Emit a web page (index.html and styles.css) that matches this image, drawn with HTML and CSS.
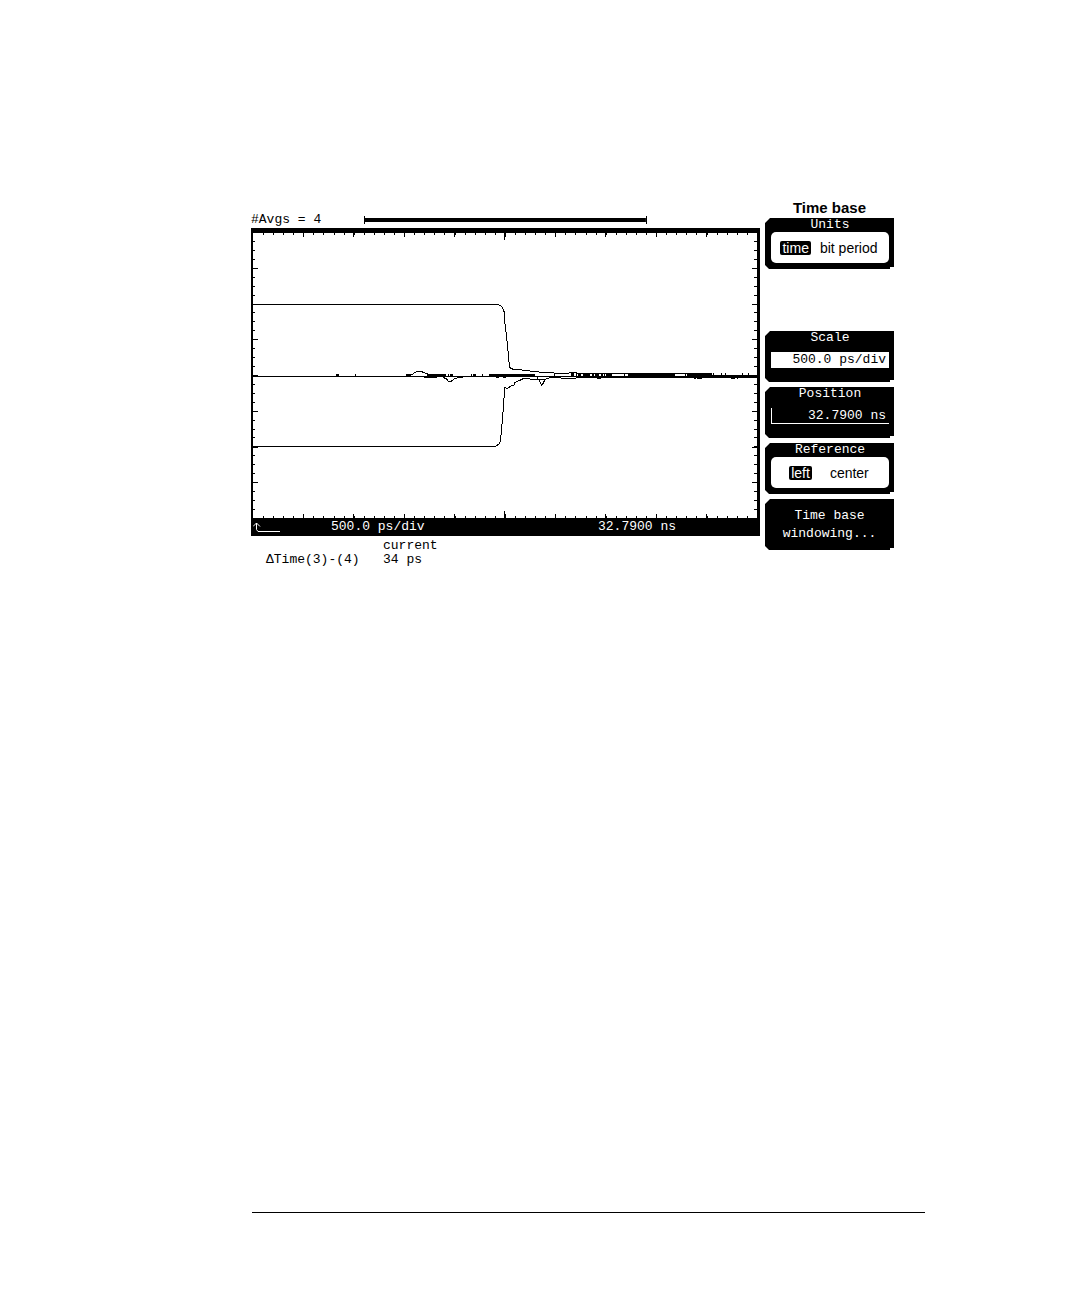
FILE: index.html
```html
<!DOCTYPE html>
<html lang="en">

<head>
    <meta charset="utf-8">
    <title>Time base</title>
    <link rel="stylesheet" href="styles.css">
</head>

<body>
    <main class="screen">
        <section class="scope">
            <div class="averages">
                <span>#Avgs = 4</span>
                <div class="progress"></div>
            </div>

            <div class="display">
                <svg class="plot" viewBox="0 0 504 285" preserveAspectRatio="none" role="img" aria-label="Waveforms">
                    <!-- graticule, short ticks -->
                    <g class="ticks">
                        <path stroke-width="4" stroke-dasharray="1 9.08" d="M10 0H504M10 285H504" />
                        <path stroke-width="4" stroke-dasharray="1 7.93" d="M0 8V285" />
                        <path stroke-width="6" stroke-dasharray="1 7.93" d="M504 8V285" />
                    </g>
                    <!-- graticule, one tick per division -->
                    <g class="ticks">
                        <path stroke-width="8" stroke-dasharray="1 49.4" d="M50 0H504M50 285H504" />
                        <path stroke-width="10" stroke-dasharray="1 34.7" d="M0 35V285M504 35V285" />
                        <path stroke-width="1" d="M251.5 0V7M251.5 278V285" />
                    </g>
                    <g class="trace">
                        <path d="M0 71.5H245L248.5 73.5L250.5 76.5L251.5 80.5V87L252.5 94L254.5 112L255.5 124L256.5 134.5L259.5 136L268.5 137L280.5 138.5L290.5 139.5L312 140.5L319.5 139.5L328 140.5H459" />
                        <path d="M0 143.5H504" />
                        <path d="M0 213.5H242.5L244.5 212L246.5 210.5L247.5 207L248.5 197L249.5 185.5L251 165.5L251.5 154.5L254.5 155.5L257 153.5L261 152L262 149.5L266.5 147.5L270.5 145.5H275.5L278.5 146.5H292L297 144.5H307L308.5 145.5H322L324.5 144.5H459" />
                        <path d="M286 146.5L287.5 150.5L288.5 152L290 150.5L291 148.5L293 146" />
                        <path d="M158.5 142L161.5 139.5L164.5 138.5H168L171 139.5L174.5 141" />
                        <path d="M171 144.5H183.5M190.5 144.5L193.5 146L195.5 148.5H198L201 146L204 145L210 144.5" />
                        <path d="M242.5 144.5H246M250 144.5H253M284.5 143V147M344 145.5H348" />
                    </g>
                    <!-- noise along the zero line -->
                    <g class="noise">
                        <path d="M83 141h3v2h-3zM102 141h1v2h-1zM153 141h5v3h-5zM174 141h19v3h-19zM195 141h1v2h-1zM197 141h3v2h-3z" />
                        <path d="M218 141h1v2h-1zM220 141h3v2h-3zM229 141h1v2h-1zM236 141h46v3h-46zM301 141h1v2h-1z" />
                        <path d="M318 140h3v4h-3zM323 140h1v4h-1zM325 140h3v4h-3zM330 140h7v4h-7zM339 140h2v4h-2zM342 140h4v4h-4zM348 140h2v4h-2zM351 140h1v4h-1zM353 140h6v4h-6z" />
                        <path d="M371 140h1v4h-1zM375 140h47v5h-47zM432 140h1v4h-1zM434 140h25v5h-25zM458 142h46v3h-46z" />
                        <path d="M460 140h1v2h-1zM468 140h1v2h-1zM472 140h1v2h-1zM489 140h1v2h-1zM495 140h1v2h-1zM441 145h2v1h-2zM444 145h5v1h-5zM478 145h4v1h-4zM484 145h1v1h-1z" />
                    </g>
                </svg>

                <div class="status">
                    <svg class="origin" viewBox="0 0 28 10" aria-hidden="true">
                        <path d="M3.5 1V7.5L5 9.5H27M0 4.5L3.5 1L7 4.5" />
                    </svg>
                    <span>500.0 ps/div</span>
                    <span>32.7900 ns</span>
                </div>
            </div>

            <table class="measure">
                <tr>
                    <td></td>
                    <th scope="col">current</th>
                </tr>
                <tr>
                    <th scope="row">ΔTime(3)-(4)</th>
                    <td>34 ps</td>
                </tr>
            </table>
        </section>

        <aside class="menu">
            <h1>Time base</h1>
            <div class="keys">
                <div class="key" role="radiogroup" aria-labelledby="units">
                    <span class="key-title" id="units">Units</span>
                    <div class="choice">
                        <label><input type="radio" name="units" checked><span>time</span></label>
                        <label><input type="radio" name="units"><span>bit period</span></label>
                    </div>
                </div>
                <div class="blank"></div>
                <div class="key">
                    <label class="key-title" for="scale">Scale</label>
                    <input class="value active" id="scale" type="text" value="500.0 ps/div">
                </div>
                <div class="key">
                    <label class="key-title" for="position">Position</label>
                    <input class="value" id="position" type="text" value="32.7900 ns">
                </div>
                <div class="key" role="radiogroup" aria-labelledby="reference">
                    <span class="key-title" id="reference">Reference</span>
                    <div class="choice spread">
                        <label><input type="radio" name="reference" checked><span>left</span></label>
                        <label><input type="radio" name="reference"><span>center</span></label>
                    </div>
                </div>
                <button class="key windowing" type="button">Time base<br>windowing...</button>
            </div>
        </aside>
    </main>

    <hr class="rule">
</body>

</html>
```

FILE: styles.css
```css
* {
    box-sizing: border-box;
}

body {
    display: flex;
    flex-direction: column;
    min-height: 100vh;
    margin: 0;
    padding: 198px 155px 83px 251px;
    background-color: #fff;
    color: #000;
    font-family: "Liberation Mono", monospace;
    font-size: 13px;
    line-height: 16px;
}

.screen {
    display: grid;
    grid-template-columns: minmax(0, 1fr) 129px;
    gap: 5px;
    align-items: start;
    padding-right: 31px;
}

.averages {
    display: flex;
    align-items: center;
    gap: 43px;
    padding-top: 14px;
    padding-right: 113px;
}

.progress {
    flex: 1;
    height: 8px;
    border: solid #000;
    border-width: 0 1px;
    background: linear-gradient(#000, #000) center / 100% 4px no-repeat;
}

.display {
    border: solid #000;
    border-width: 5px 3px 0 2px;
    background-color: #000;
}

.plot {
    display: block;
    width: 100%;
    height: 285px;
    background-color: #fff;
    shape-rendering: crispEdges;
}

.ticks,
.trace {
    fill: none;
    stroke: #000;
}

.status {
    display: grid;
    grid-template-columns: 78fr 267fr 159fr;
    align-items: center;
    height: 18px;
    color: #fff;
}

.origin {
    width: 28px;
    height: 10px;
    fill: none;
    stroke: #fff;
}

.measure {
    margin-top: 3px;
    border-collapse: collapse;
    line-height: 14px;
    text-align: left;
}

.measure th,
.measure td {
    padding: 0;
    font-weight: normal;
}

.measure tr > :first-child {
    width: 132px;
    padding-left: 15px;
}

.menu h1 {
    margin: 0;
    font: bold 15px/20px "Liberation Sans", sans-serif;
    text-align: center;
}

.keys {
    display: grid;
    grid-template-rows: 51px 52px;
    grid-auto-rows: 51px;
    gap: 5px;
}

.key {
    display: flex;
    flex-direction: column;
    padding: 0 5px 6px 6px;
    border: 0;
    background-color: #000;
    color: #fff;
    clip-path: polygon(5px 0, 100% 0, 100% 49px, 125px 49px, 125px 100%, 4px 100%, 0 47px, 0 5px);
}

.key-title {
    line-height: 14px;
    text-align: center;
}

.choice {
    display: flex;
    flex: 1;
    align-items: center;
    justify-content: center;
    gap: 7px;
    border-radius: 5px;
    background-color: #fff;
    color: #000;
    font-family: "Liberation Sans", sans-serif;
    font-size: 14px;
}

.choice.spread {
    gap: 16px;
}

.choice input {
    position: absolute;
    opacity: 0;
}

.choice span {
    display: block;
    padding: 0 2px;
    border-radius: 2px;
    line-height: 14px;
    white-space: nowrap;
}

.choice input:checked + span {
    background-color: #000;
    color: #fff;
}

.value {
    width: 100%;
    height: 16px;
    margin-top: 7px;
    padding: 0 3px;
    border: solid #fff;
    border-width: 0 0 1px 1px;
    border-radius: 0;
    background-color: #000;
    color: #fff;
    font: inherit;
    text-align: right;
}

.value.active {
    background-color: #fff;
    color: #000;
}

.windowing {
    align-items: center;
    justify-content: center;
    padding: 0;
    font: inherit;
    line-height: 18px;
}

.rule {
    align-self: stretch;
    margin: auto 0 0 1px;
    border: 0;
    border-top: 1px solid #000;
}
```
